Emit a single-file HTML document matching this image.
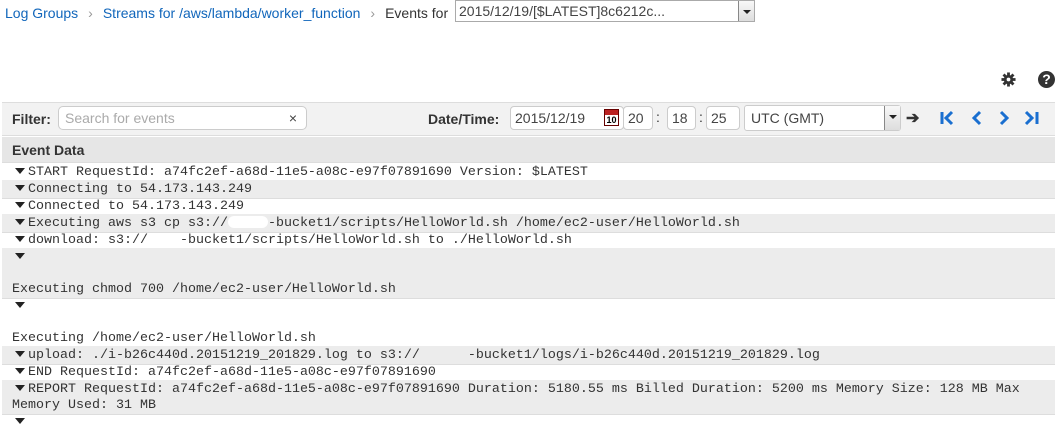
<!DOCTYPE html>
<html><head><meta charset="utf-8">
<style>
*{box-sizing:border-box;margin:0;padding:0}
body{width:1055px;height:442px;background:#fff;font-family:"Liberation Sans",Arial,sans-serif;position:relative;overflow:hidden;color:#333}
.a{position:absolute}
.bc{top:4px;left:5px;font-size:14px;height:20px;line-height:18px;white-space:nowrap}
.bc .l{color:#1166bb}
.bc .s{color:#999;margin:0 10px;font-size:14px}
.sel{border:1px solid #aaa;background:#fff;height:22px;font-size:14px;line-height:20px;padding-left:3px;color:#444}
.dd{position:absolute;right:0;top:0;width:16px;height:20px;border-left:1px solid #888;background:linear-gradient(#f8f8f8,#ddd)}
.dd:after{content:"";position:absolute;left:4px;top:9px;border:4px solid transparent;border-top:4px solid #222;border-bottom:0}
.tb{top:102px;left:2px;width:1053px;height:34px;background:#f2f2f2;border-top:1px solid #ddd;border-bottom:1px solid #ddd}
.lbl{font-weight:bold;font-size:14px;color:#333}
.inp{border:1px solid #ccc;border-radius:5px;background:#fff;height:24px;font-size:14px;line-height:22px;padding-left:6px;color:#444}
.eh{top:137px;left:2px;width:1053px;height:26px;background:#e6e6e6;border-bottom:1px solid #ddd;font-weight:bold;font-size:14px;line-height:26px;padding-left:10px}
.rows{top:163px;left:2px;width:1053px;font-family:"Liberation Mono","Courier New",monospace;font-size:13.33px;color:#333}
.r{border-bottom:1px solid #ddd;line-height:16px;padding:2px 0 0 10px;margin-bottom:-2px;white-space:pre}
.r+.r{margin-top:0}
.g{background:#ececec}
.t{display:inline-block;width:0;height:0;border-left:5px solid transparent;border-right:5px solid transparent;border-top:6px solid #222;margin:0 3px 1px 3px;vertical-align:middle}
.blank{display:inline-block;width:40px;height:12px;background:#fff;border-radius:6px;vertical-align:middle}
</style></head><body>
<div class="a bc"><span class="l">Log Groups</span><span class="s">›</span><span class="l">Streams for /aws/lambda/worker_function</span><span class="s">›</span><span>Events for</span></div>
<div class="a sel" style="left:455px;top:0;width:300px">2015/12/19/[$LATEST]8c6212c...<div class="dd"></div></div>

<svg class="a" style="left:1001px;top:72px" width="15" height="15" viewBox="0 0 16 16"><g fill="#333"><circle cx="8" cy="8" r="5"/><rect x="6.5" y="0.5" width="3" height="15"/><rect x="0.5" y="6.5" width="15" height="3"/><rect x="6.5" y="0.5" width="3" height="15" transform="rotate(45 8 8)"/><rect x="6.5" y="0.5" width="3" height="15" transform="rotate(-45 8 8)"/></g><circle cx="8" cy="8" r="2" fill="#fff"/></svg>
<div class="a" style="left:1038px;top:71px;width:17px;height:17px;border-radius:50%;background:#333;color:#fff;font-weight:bold;font-size:14px;text-align:center;line-height:17px">?</div>

<div class="a tb"></div>
<div class="a lbl" style="left:12px;top:111px">Filter:</div>
<div class="a inp" style="left:58px;top:106px;width:249px;color:#aaa">Search for events<span style="position:absolute;right:9px;color:#444;font-size:14px">×</span></div>
<div class="a lbl" style="left:428px;top:111px">Date/Time:</div>
<div class="a inp" style="left:510px;top:106px;width:114px;border-radius:4px;padding-left:4px">2015/12/19</div>
<div class="a" style="left:604px;top:109px;width:15px;height:17px;background:#fff;border:1px solid #600"><div style="height:5px;background:#b22"></div><div style="font-size:9px;font-weight:bold;line-height:10px;text-align:center;color:#000">10</div></div>
<div class="a inp" style="left:623px;top:106px;width:30px;border-radius:4px;padding-left:4px">20</div>
<div class="a" style="left:656px;top:109px;font-size:14px">:</div>
<div class="a inp" style="left:667px;top:106px;width:29px;border-radius:4px;padding-left:4px">18</div>
<div class="a" style="left:699px;top:109px;font-size:14px">:</div>
<div class="a inp" style="left:706px;top:106px;width:34px;border-radius:4px;padding-left:4px">25</div>
<div class="a inp" style="left:744px;top:105px;width:157px;height:26px;line-height:24px;border-radius:3px">UTC (GMT)<div class="dd" style="height:24px;top:0"></div></div>
<div class="a" style="left:906px;top:108px;font-size:16px;font-weight:bold;color:#333">➔</div>
<svg class="a" style="left:940px;top:110px" width="105" height="16" viewBox="0 0 105 16"><g fill="none" stroke="#1a6fd0" stroke-width="3"><path d="M2 2V14M12 2L6 8L12 14"/><path d="M40 2L34 8L40 14"/><path d="M61 2L67 8L61 14"/><path d="M86 2L92 8L86 14M97 2V14"/></g></svg>

<div class="a eh">Event Data</div>
<div class="a rows">
<div class="r"><span class="t"></span>START RequestId: a74fc2ef-a68d-11e5-a08c-e97f07891690 Version: $LATEST</div>
<div class="r g"><span class="t"></span>Connecting to 54.173.143.249</div>
<div class="r"><span class="t"></span>Connected to 54.173.143.249</div>
<div class="r g"><span class="t"></span>Executing aws s3 cp s3://<span class="blank"></span>-bucket1/scripts/HelloWorld.sh /home/ec2-user/HelloWorld.sh</div>
<div class="r"><span class="t"></span>download: s3://    -bucket1/scripts/HelloWorld.sh to ./HelloWorld.sh</div>
<div class="r g"><span class="t"></span>

Executing chmod 700 /home/ec2-user/HelloWorld.sh</div>
<div class="r"><span class="t"></span>

Executing /home/ec2-user/HelloWorld.sh</div>
<div class="r g"><span class="t"></span>upload: ./i-b26c440d.20151219_201829.log to s3://      -bucket1/logs/i-b26c440d.20151219_201829.log</div>
<div class="r"><span class="t"></span>END RequestId: a74fc2ef-a68d-11e5-a08c-e97f07891690</div>
<div class="r g"><span class="t"></span>REPORT RequestId: a74fc2ef-a68d-11e5-a08c-e97f07891690 Duration: 5180.55 ms Billed Duration: 5200 ms Memory Size: 128 MB Max
Memory Used: 31 MB</div>
<div class="r" style="border:0"><span class="t"></span></div>
</div>
</body></html>
